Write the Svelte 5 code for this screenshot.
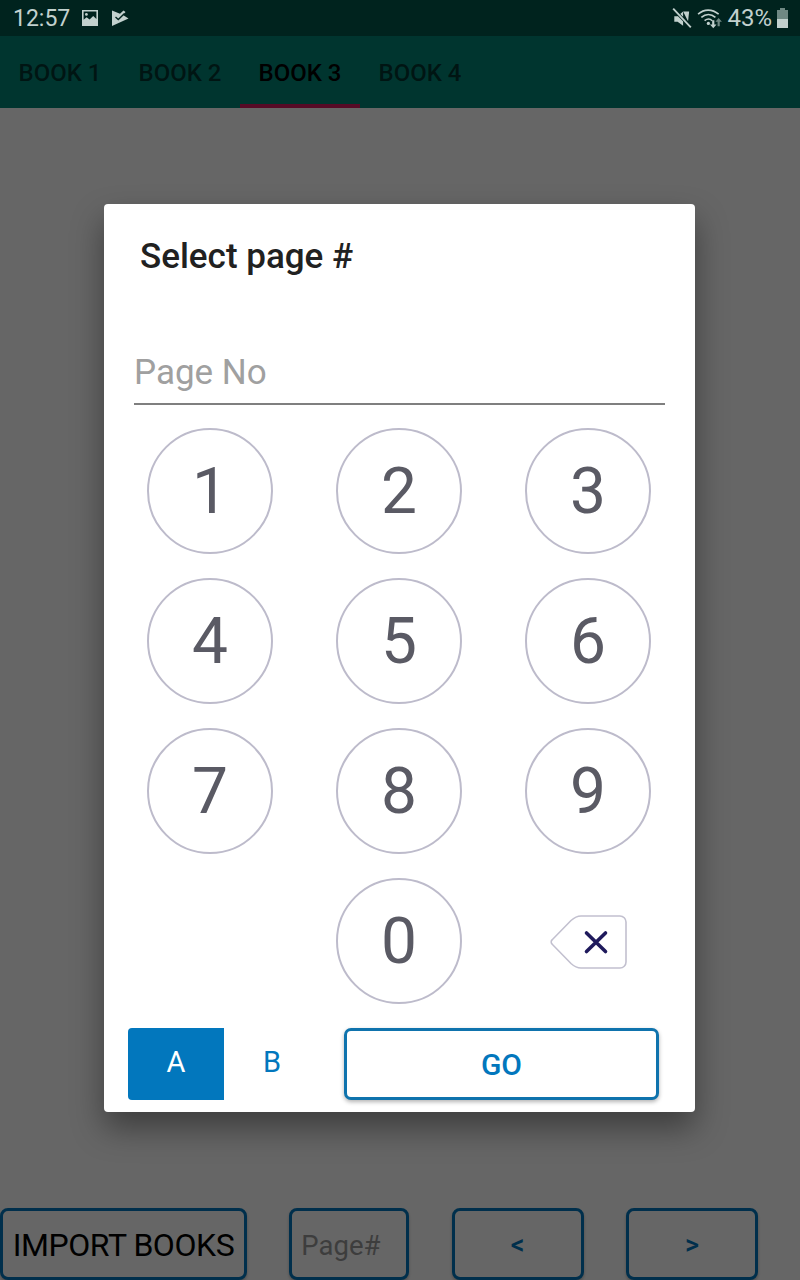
<script>
    const tabs = ["BOOK 1", "BOOK 2", "BOOK 3", "BOOK 4"];
    const keys = ["1", "2", "3", "4", "5", "6", "7", "8", "9", "", "0", "back"];

    let pageNo = $state("");
    let side = $state("A");
    let activeTab = $state(2);

    // Keypad press: digits append, back removes the last one
    function press(key) {
        if (key === "back") {
            pageNo = pageNo.slice(0, -1);
        } else {
            pageNo += key;
        }
    }
</script>

<div class="page">
    <div class="status-bar">
        <span class="time">12:57</span>
        <svg class="st-icon" width="18" height="18" viewBox="0 0 18 18">
            <path fill="#c2d1ce" fill-rule="evenodd" d="M1 1h16v16H1zM2.600 2.600v8.200l3-2.600 3 2.400 3.600-3.600 3.200 3V2.600z"/>
            <circle cx="5.400" cy="5.400" r="1.400" fill="#c2d1ce"/>
        </svg>
        <svg class="st-icon flag" width="18" height="18" viewBox="0 0 18 18">
            <path fill="#c2d1ce" d="M1 1.500l8 3.300 3.500-3.300 2 1.500-2.500 3L17.500 9.500 1 17z"/>
            <path fill="none" stroke="#00231e" stroke-width="1.400" d="M4.500 8l2.800 2.500L13.500 4.500"/>
        </svg>
        <div class="st-right">
            <svg width="22" height="22" viewBox="0 0 20 20">
                <path fill="#c2d1ce" d="M2 7h3l5-4.500v13L5 12H2z" transform="translate(1 1.500)"/>
                <path fill="#c2d1ce" d="M11 4l5.500 0-1 9z"/>
                <path stroke="#00231e" stroke-width="3" d="M1 1l18 18"/>
                <path stroke="#c2d1ce" stroke-width="1.700" d="M2 1.500l16 17"/>
            </svg>
            <svg class="wifi" width="26" height="22" viewBox="0 0 24 20">
                <g fill="none" stroke="#c2d1ce" stroke-width="1.500">
                    <path d="M1 6.500c5.500-5 13-5 19 0"/>
                    <path d="M4 9.500c4-3.500 9-3.500 13 0"/>
                    <path d="M7 12.500c2.500-2 5-2 7 0"/>
                </g>
                <circle cx="10.500" cy="15" r="1.500" fill="#c2d1ce"/>
                <path fill="#c2d1ce" d="M14 12h2v4h2l-3 3.500-3-3.500h2z"/>
                <path fill="#6f8883" d="M20 10l3 3.500h-2v4h-2v-4h-2z"/>
            </svg>
            <span class="pct">43%</span>
            <svg class="battery" width="13" height="20" viewBox="0 0 13 20">
                <path fill="#6f8883" d="M4 0h5v2h3v18H1V2h3z"/>
                <path fill="#c2d1ce" d="M1 11h11v9H1z"/>
            </svg>
        </div>
    </div>

    <div class="tab-bar">
        {#each tabs as tab, i}
            <button class="tab" class:active={activeTab === i} onclick={() => (activeTab = i)}>{tab}</button>
        {/each}
    </div>

    <div class="content"></div>

    <div class="bottom-bar">
        <button class="outline import">IMPORT BOOKS</button>
        <input class="outline page-input" placeholder="Page#" />
        <button class="outline nav">&lt;</button>
        <button class="outline nav">&gt;</button>
    </div>

    <div class="scrim">
        <div class="dialog">
            <div class="dialog-title">Select page #</div>
            <input class="page-no" placeholder="Page No" bind:value={pageNo} />

            <div class="keypad">
                {#each keys as key}
                    {#if key === "back"}
                        <button class="backspace" aria-label="Delete" onclick={() => press(key)}>
                            <svg width="78" height="56" viewBox="0 0 78 56">
                                <path fill="#fff" stroke="#c2c0cf" stroke-width="1.600" d="M2.500 30.500a3 3 0 0 1 0-5L21 6.500q5-4.500 10-4.500h39a6 6 0 0 1 6 6v40a6 6 0 0 1-6 6H31q-5 0-10-4.500z"/>
                                <path stroke="#1f1a5c" stroke-width="3.600" stroke-linecap="round" d="M36.500 19l19 18.500M55.500 19l-19 18.500"/>
                            </svg>
                        </button>
                    {:else if key === ""}
                        <span></span>
                    {:else}
                        <button class="digit" onclick={() => press(key)}>{key}</button>
                    {/if}
                {/each}
            </div>

            <div class="actions">
                <div class="segments">
                    <button class="segment" class:on={side === "A"} onclick={() => (side = "A")}>A</button>
                    <button class="segment" class:on={side === "B"} onclick={() => (side = "B")}>B</button>
                </div>
                <button class="go">GO</button>
            </div>
        </div>
    </div>
</div>

<style>
    :global(body) {
        margin: 0;
        font-family: Roboto, sans-serif;
    }

    button,
    input {
        font-family: Roboto, sans-serif;
        box-sizing: border-box;
        margin: 0;
        outline: none;
    }

    .page {
        position: relative;
        display: flex;
        flex-direction: column;
        height: 1280px;
        overflow: hidden;
        background: #fff;
    }

    .status-bar {
        position: relative;
        z-index: 2;
        display: flex;
        align-items: center;
        height: 36px;
        padding: 0 12px 0 13px;
        box-sizing: border-box;
        background: #00231e;
        color: #c2d1ce;
    }

    .time {
        font-size: 23px;
        width: 68px;
    }

    .st-icon {
        margin-right: 12px;
    }

    .st-right {
        display: flex;
        align-items: center;
        margin-left: auto;
    }

    .wifi {
        margin-left: 4px;
    }

    .pct {
        font-size: 24px;
        margin-left: 4px;
        margin-right: 4px;
    }

    .battery {
        margin-right: -1px;
    }

    .tab-bar {
        display: flex;
        height: 72px;
        background: #008577;
    }

    .tab {
        width: 120px;
        border: none;
        border-bottom: 4px solid transparent;
        padding: 6px 0 0;
        background: none;
        font-size: 24px;
        font-weight: 500;
        color: rgba(0, 0, 0, 0.6);
    }

    .tab.active {
        color: #000;
        border-bottom-color: #d81b60;
    }

    .content {
        flex: 1;
    }

    .bottom-bar {
        display: flex;
        gap: 42.300px;
        height: 72px;
    }

    .outline {
        height: 72px;
        border: 3px solid #0277bd;
        border-radius: 8px;
        background: #fff;
        box-shadow: 0 2px 3px rgba(0, 0, 0, 0.25);
    }

    .import {
        width: 247px;
        padding: 2px 0 0;
        font-size: 32px;
        letter-spacing: -0.450px;
        color: #000;
    }

    .page-input {
        width: 120px;
        padding: 2px 9px 0;
        font-size: 27.500px;
        color: #000;
    }

    .page-input::placeholder {
        color: #9a9a9a;
        opacity: 1;
    }

    .nav {
        width: 132px;
        padding: 2px 0 0;
        font-size: 27px;
        font-weight: 500;
        color: #0277bd;
    }

    .scrim {
        position: absolute;
        inset: 36px 0 0 0;
        z-index: 1;
        display: flex;
        align-items: center;
        justify-content: center;
        background: rgba(0, 0, 0, 0.6);
    }

    .dialog {
        display: flex;
        flex-direction: column;
        box-sizing: border-box;
        width: 591px;
        height: 908px;
        margin-right: 1px;
        padding: 31px 30px 12px;
        border-radius: 4px;
        background: #fff;
        box-shadow: 0 16px 32px rgba(0, 0, 0, 0.4);
    }

    .dialog-title {
        padding-left: 6px;
        font-size: 35px;
        font-weight: 500;
        line-height: 44px;
        color: #212121;
    }

    .page-no {
        width: 100%;
        height: 62px;
        margin-top: 64px;
        margin-bottom: 23px;
        padding: 0 0 2px;
        border: none;
        border-bottom: 2px solid #7f7f7f;
        font-size: 35px;
        color: #212121;
    }

    .page-no::placeholder {
        color: #a0a0a0;
        opacity: 1;
    }

    .keypad {
        display: grid;
        grid-template-columns: repeat(3, 189px);
        grid-auto-rows: 150px;
        justify-content: center;
        justify-items: center;
        margin: 0 -18px 0 -19px;
    }

    .digit {
        width: 126px;
        height: 126px;
        padding: 0;
        border: 2px solid #bdbbcb;
        border-radius: 50%;
        background: #fff;
        font-size: 64px;
        color: #5a5a64;
    }

    .backspace {
        align-self: center;
        margin-bottom: 22px;
        margin-left: 1px;
        padding: 0;
        border: none;
        background: none;
        line-height: 0;
    }

    .actions {
        display: flex;
        align-items: stretch;
        height: 72px;
        margin-left: -6px;
    }

    .segments {
        display: flex;
        margin-right: 24px;
    }

    .segment {
        width: 96px;
        padding: 0 0 4px;
        border: none;
        background: #fff;
        font-size: 29px;
        color: #0277bd;
    }

    .segment.on {
        border-radius: 4px 0 0 4px;
        background: #0277bd;
        color: #fff;
    }

    .go {
        width: 315px;
        padding: 1px 0 0;
        border: 3px solid #0f73ad;
        border-radius: 7px;
        background: #fff;
        box-shadow: 0 2px 4px rgba(0, 0, 0, 0.3);
        font-size: 30px;
        font-weight: 500;
        color: #0277bd;
    }
</style>
